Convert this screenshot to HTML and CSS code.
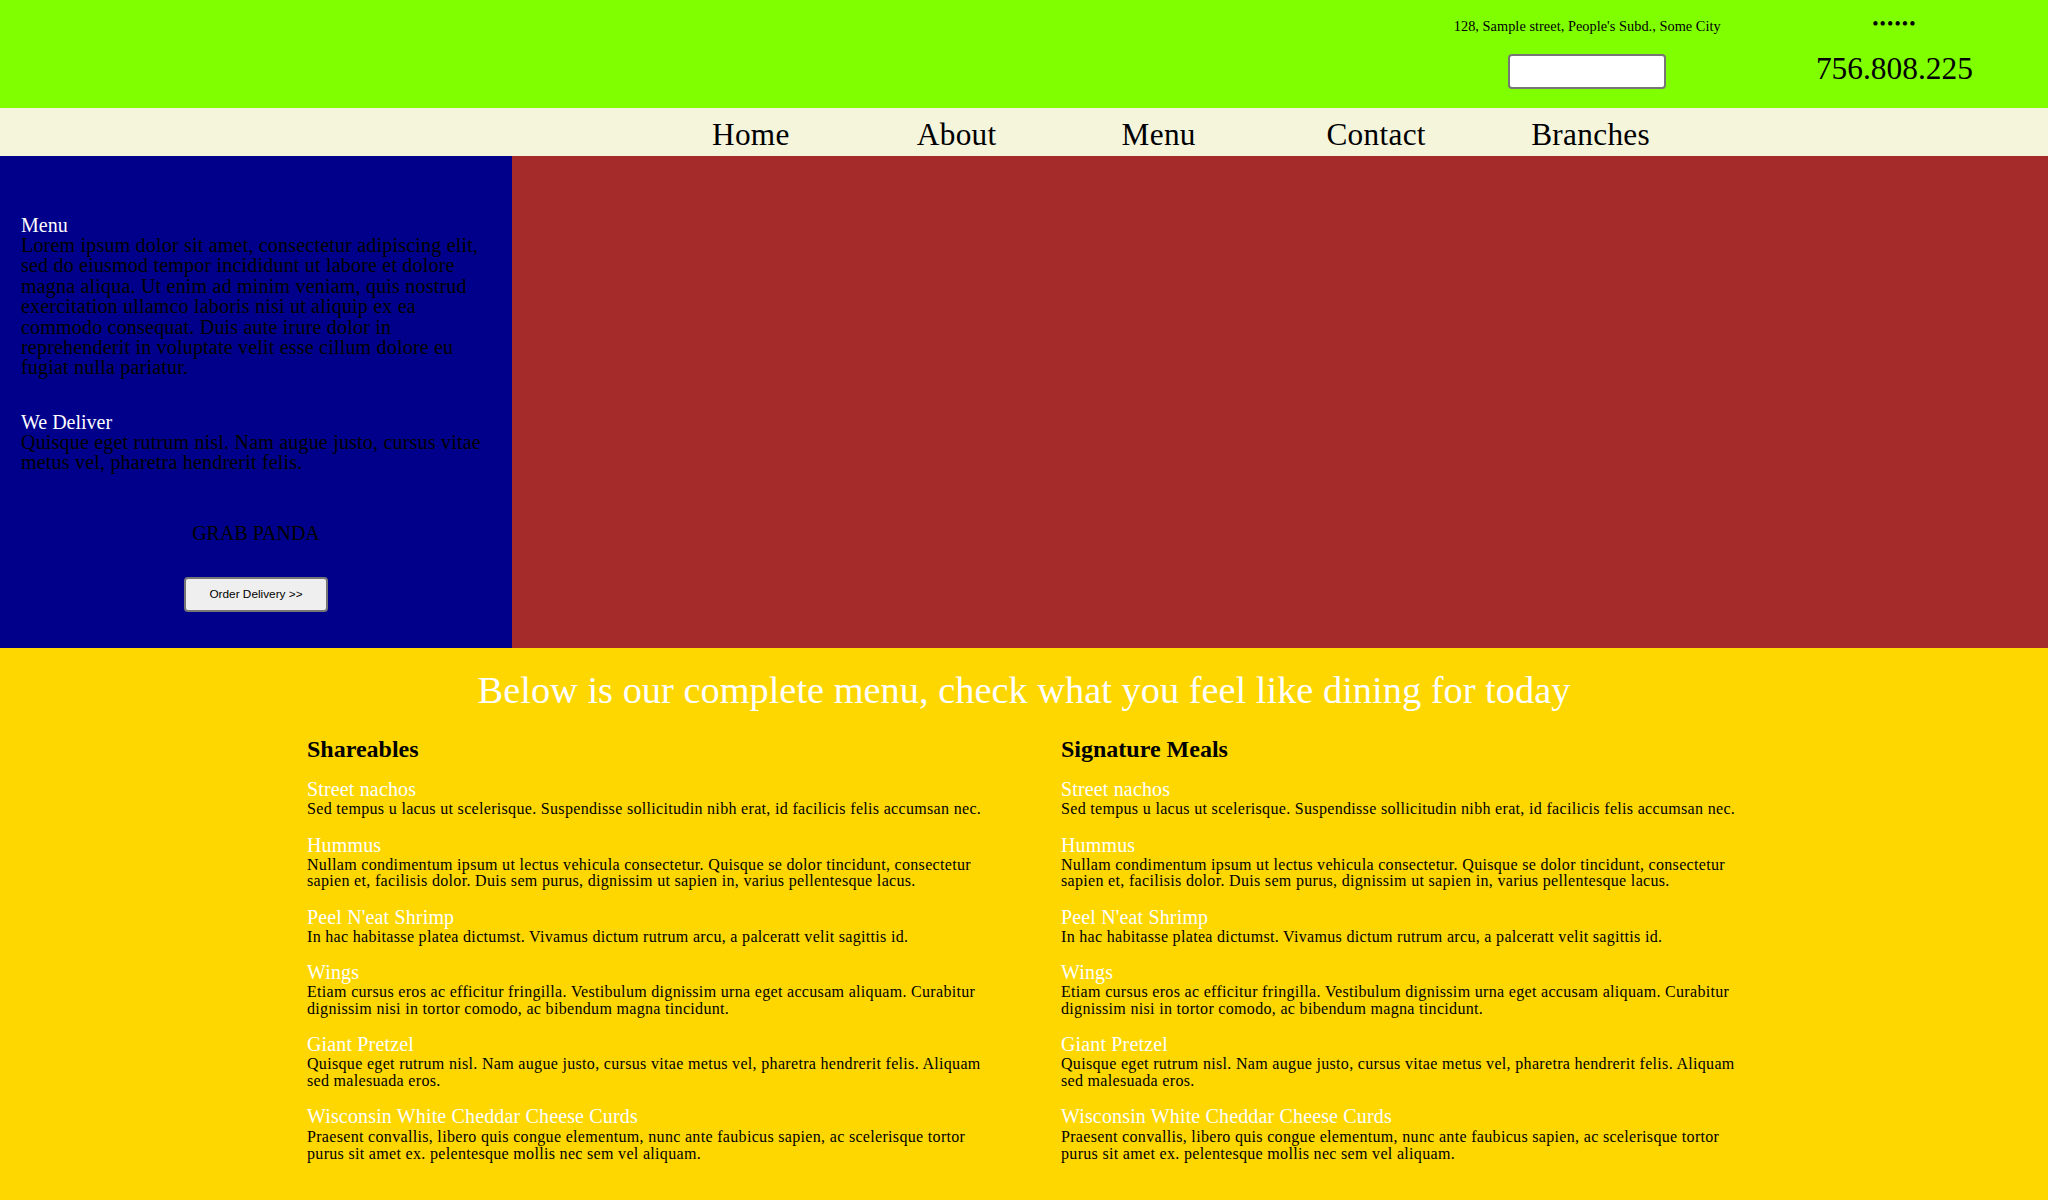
FILE: index.html
```html
<!DOCTYPE html>
<html lang="en">
<head>
<meta charset="utf-8">
<title>Grab Panda</title>
<link rel="stylesheet" href="styles.css">
</head>
<body>
<header class="topbar">
  <div class="hdr-col hdr-col--left">
    <div class="address">128, Sample street, People's Subd., Some City</div>
    <input class="search" type="text" aria-label="Search">
  </div>
  <div class="hdr-col hdr-col--right">
    <div class="dots">••••••</div>
    <div class="phone">756.808.225</div>
  </div>
</header>
<nav class="nav">
  <a class="nav-item" href="#">Home</a>
  <a class="nav-item" href="#">About</a>
  <a class="nav-item" href="#">Menu</a>
  <a class="nav-item" href="#">Contact</a>
  <a class="nav-item" href="#">Branches</a>
</nav>
<section class="hero">
  <aside class="side">
    <h3 class="side-title">Menu</h3>
    <p class="side-text">Lorem ipsum dolor sit amet, consectetur adipiscing elit, sed do eiusmod tempor incididunt ut labore et dolore magna aliqua. Ut enim ad minim veniam, quis nostrud exercitation ullamco laboris nisi ut aliquip ex ea commodo consequat. Duis aute irure dolor in reprehenderit in voluptate velit esse cillum dolore eu fugiat nulla pariatur.</p>
    <h3 class="side-title side-title--gap">We Deliver</h3>
    <p class="side-text">Quisque eget rutrum nisl. Nam augue justo, cursus vitae metus vel, pharetra hendrerit felis.</p>
    <div class="brand">GRAB PANDA</div>
    <div class="btn-row"><button class="order-btn" type="button">Order Delivery &gt;&gt;</button></div>
  </aside>
  <div class="feature"></div>
</section>
<section class="menu">
  <h1 class="menu-heading">Below is our complete menu, check what you feel like dining for today</h1>
  <div class="menu-cols">
    <div class="menu-col">
      <h2 class="col-title">Shareables</h2>
      <div class="item"><div class="item-name">Street nachos</div><div class="item-desc">Sed tempus u lacus ut scelerisque. Suspendisse sollicitudin nibh erat, id facilicis felis accumsan nec.</div></div>
      <div class="item"><div class="item-name">Hummus</div><div class="item-desc">Nullam condimentum ipsum ut lectus vehicula consectetur. Quisque se dolor tincidunt, consectetur sapien et, facilisis dolor. Duis sem purus, dignissim ut sapien in, varius pellentesque lacus.</div></div>
      <div class="item"><div class="item-name">Peel N'eat Shrimp</div><div class="item-desc">In hac habitasse platea dictumst. Vivamus dictum rutrum arcu, a palceratt velit sagittis id.</div></div>
      <div class="item"><div class="item-name">Wings</div><div class="item-desc">Etiam cursus eros ac efficitur fringilla. Vestibulum dignissim urna eget accusam aliquam. Curabitur dignissim nisi in tortor comodo, ac bibendum magna tincidunt.</div></div>
      <div class="item"><div class="item-name">Giant Pretzel</div><div class="item-desc">Quisque eget rutrum nisl. Nam augue justo, cursus vitae metus vel, pharetra hendrerit felis. Aliquam sed malesuada eros.</div></div>
      <div class="item item--last"><div class="item-name">Wisconsin White Cheddar Cheese Curds</div><div class="item-desc item-desc--loose">Praesent convallis, libero quis congue elementum, nunc ante faubicus sapien, ac scelerisque tortor purus sit amet ex. pelentesque mollis nec sem vel aliquam.</div></div>
    </div>
    <div class="menu-col">
      <h2 class="col-title">Signature Meals</h2>
      <div class="item"><div class="item-name">Street nachos</div><div class="item-desc">Sed tempus u lacus ut scelerisque. Suspendisse sollicitudin nibh erat, id facilicis felis accumsan nec.</div></div>
      <div class="item"><div class="item-name">Hummus</div><div class="item-desc">Nullam condimentum ipsum ut lectus vehicula consectetur. Quisque se dolor tincidunt, consectetur sapien et, facilisis dolor. Duis sem purus, dignissim ut sapien in, varius pellentesque lacus.</div></div>
      <div class="item"><div class="item-name">Peel N'eat Shrimp</div><div class="item-desc">In hac habitasse platea dictumst. Vivamus dictum rutrum arcu, a palceratt velit sagittis id.</div></div>
      <div class="item"><div class="item-name">Wings</div><div class="item-desc">Etiam cursus eros ac efficitur fringilla. Vestibulum dignissim urna eget accusam aliquam. Curabitur dignissim nisi in tortor comodo, ac bibendum magna tincidunt.</div></div>
      <div class="item"><div class="item-name">Giant Pretzel</div><div class="item-desc">Quisque eget rutrum nisl. Nam augue justo, cursus vitae metus vel, pharetra hendrerit felis. Aliquam sed malesuada eros.</div></div>
      <div class="item item--last"><div class="item-name">Wisconsin White Cheddar Cheese Curds</div><div class="item-desc item-desc--loose">Praesent convallis, libero quis congue elementum, nunc ante faubicus sapien, ac scelerisque tortor purus sit amet ex. pelentesque mollis nec sem vel aliquam.</div></div>
    </div>
  </div>
</section>
</body>
</html>
```
FILE: styles.css
```css
* { box-sizing: border-box; }

html, body {
  margin: 0;
  padding: 0;
}

body {
  font-family: "Liberation Serif", "Times New Roman", serif;
  color: #000;
  line-height: 1;
  background: #ffd700;
}

/* ---------- top bar ---------- */
.topbar {
  height: 108px;
  background: #80ff00;
  display: flex;
  justify-content: flex-end;
}

.hdr-col {
  width: 15%;
  display: flex;
  flex-direction: column;
  align-items: center;
  text-align: center;
}

.hdr-col--left { padding-top: 19px; }
.hdr-col--right { padding-top: 15px; }

.address {
  font-size: 14.3px;
  line-height: 14px;
  letter-spacing: 0.05px;
  white-space: nowrap;
}

.search {
  margin-top: 21px;
  width: 158px;
  height: 35px;
  border: 2px solid #767676;
  border-radius: 4px;
  background: #fff;
  padding: 0;
}

.dots {
  font-size: 18px;
  line-height: 18px;
  letter-spacing: 1.1px;
}

.phone {
  margin-top: 20px;
  font-size: 31.4px;
  line-height: 31.4px;
  white-space: nowrap;
}

/* ---------- nav ---------- */
.nav {
  height: 48px;
  background: #f5f5dc;
  display: flex;
  padding-left: 712px;
  padding-top: 11px;
}

.nav-item {
  flex: 0 0 204.8px;
  font-size: 31.3px;
  line-height: 32px;
  letter-spacing: 0.3px;
  color: #000;
  text-decoration: none;
  white-space: nowrap;
}

/* ---------- hero ---------- */
.hero {
  display: flex;
  height: 492px;
}

.side {
  flex: 0 0 512px;
  background: #00008b;
  padding: 59px 21px 0;
}

.side-title {
  margin: 0;
  font-size: 20px;
  line-height: 20px;
  font-weight: normal;
  color: #fff;
}

.side-title--gap { margin-top: 34px; }

.side-text {
  margin: 0;
  font-size: 20px;
  line-height: 20.4px;
  letter-spacing: 0.2px;
  color: #000;
}

.brand {
  margin-top: 50px;
  font-size: 20px;
  line-height: 20px;
  text-align: center;
  color: #000;
}

.btn-row {
  margin-top: 34px;
  display: flex;
  justify-content: center;
}

.order-btn {
  width: 144px;
  height: 35px;
  background: #efefef;
  border: 2px solid #767676;
  border-radius: 4px;
  font-family: "Liberation Sans", Arial, sans-serif;
  font-size: 11.8px;
  color: #000;
  padding: 0;
}

.feature {
  flex: 1;
  background: #a52a2a;
}

/* ---------- menu ---------- */
.menu {
  background: #ffd700;
  min-height: 552px;
  padding: 23px 0 30px;
}

.menu-heading {
  margin: 0;
  font-size: 38.4px;
  line-height: 38.4px;
  font-weight: normal;
  color: #fff;
  text-align: center;
}

.menu-cols {
  margin-top: 28px;
  padding-left: 307px;
  display: grid;
  grid-template-columns: 685px 685px;
  column-gap: 69px;
}

.col-title {
  margin: 0 0 18px;
  font-size: 24px;
  line-height: 24px;
  font-weight: bold;
  color: #000;
}

.item { margin-bottom: 17px; }
.item--last { margin-top: 3px; }

.item-name {
  font-size: 20px;
  line-height: 20px;
  letter-spacing: 0.15px;
  color: #fff;
}

.item-desc {
  padding-top: 2px;
  font-size: 16px;
  line-height: 16.5px;
  letter-spacing: 0.32px;
  color: #000;
}

.item-desc--loose { line-height: 17px; }
```
